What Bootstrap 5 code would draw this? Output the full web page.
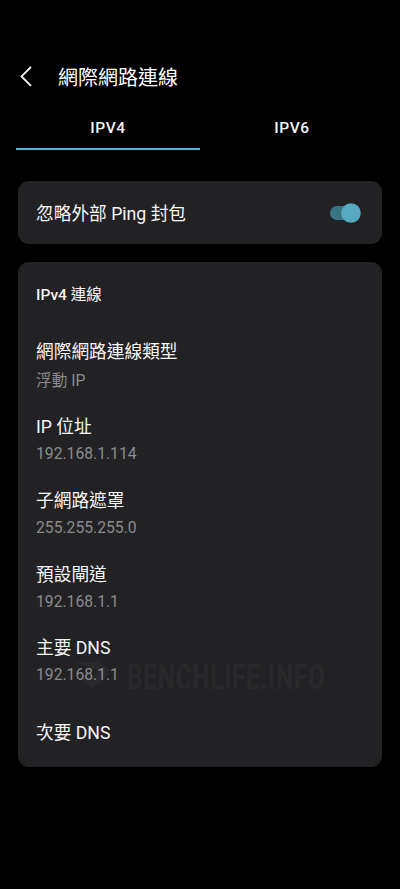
<!DOCTYPE html>
<html lang="zh-Hant" data-bs-theme="dark">
<head>
<meta charset="utf-8">
<meta name="viewport" content="width=device-width, initial-scale=1">
<title>網際網路連線</title>
<link href="https://cdn.jsdelivr.net/npm/bootstrap@5.3.0/dist/css/bootstrap.min.css" rel="stylesheet">
<style>
body{background:#000;color:#f5f5f5;font-family:Roboto,"Noto Sans CJK TC",sans-serif;min-height:889px}
.topbar{padding:62px 20px 0;height:107px}
.topbar h1{font-size:20px;line-height:32px;margin-left:26px}
.back-icon{width:12px;height:21px}
.tabs{margin:0 16px;height:43px}
.tabs .nav-link{color:#f5f5f5;font-size:15.5px;font-weight:500;letter-spacing:.6px;line-height:20px;padding:11px 0 10px;border-bottom:2px solid transparent;border-radius:0}
.tabs .nav-link.active{border-color:#57b4ce}
.panel{background:#222224;border:0;border-radius:11px;margin:0 18px;padding:0 18px}
.panel-switch{margin-top:31px;height:63px;padding-right:21px}
.panel-switch .item-label{padding-top:2px}
.panel-list{margin-top:18px;height:505px;padding-top:18px}
.item-label{font-size:17.7px;line-height:30px;white-space:nowrap}
.item-value{font-size:15.7px;line-height:24.6px;color:#8b8b8d}
.group-title{font-size:15.5px;line-height:30px;font-weight:500;margin-bottom:26.5px}
.group-title span{font-weight:400}
.entry{height:73.8px}
.entry-first{height:75.5px}
.entry-first .item-value{line-height:27px}
.entry-last{padding-top:11px}
.toggle{width:31px;height:20px}
.watermark{left:57px;top:384px;width:264px;height:60px;opacity:.03}
</style>
<script src="https://cdn.jsdelivr.net/npm/bootstrap@5.3.0/dist/js/bootstrap.bundle.min.js"></script>
</head>
<body>
<header class="topbar d-flex align-items-start">
  <svg class="back-icon mt-1" viewBox="0 0 12 21" fill="none" stroke="#f5f5f5" stroke-width="1.8"><path d="M11 1 1.5 10.4 11 19.8"/></svg>
  <h1 class="mb-0 fw-normal">網際網路連線</h1>
</header>
<ul class="nav nav-fill tabs flex-nowrap">
  <li class="nav-item w-50"><a class="nav-link active" href="#">IPV4</a></li>
  <li class="nav-item w-50"><a class="nav-link" href="#">IPV6</a></li>
</ul>
<main>
  <section class="card panel panel-switch flex-row align-items-center justify-content-between">
    <span class="item-label">忽略外部 Ping 封包</span>
    <svg class="toggle" viewBox="0 0 31 20"><rect x="0" y="3" width="28" height="14" rx="7" fill="#397482"/><circle cx="21" cy="10" r="9.8" fill="#57a9c1"/></svg>
  </section>
  <section class="card panel panel-list">
    <div class="group-title">IPv4 <span>連線</span></div>
    <div class="entry entry-first"><div class="item-label">網際網路連線類型</div><div class="item-value">浮動 IP</div></div>
    <div class="entry"><div class="item-label">IP 位址</div><div class="item-value">192.168.1.114</div></div>
    <div class="entry"><div class="item-label">子網路遮罩</div><div class="item-value">255.255.255.0</div></div>
    <div class="entry"><div class="item-label">預設閘道</div><div class="item-value">192.168.1.1</div></div>
    <div class="entry"><div class="item-label">主要 DNS</div><div class="item-value">192.168.1.1</div></div>
    <div class="entry-last"><div class="item-label">次要 DNS</div></div>
    <svg class="watermark position-absolute" viewBox="0 0 264 60" fill="#fff"><path d="M0 16H22L35 24 32 31 17 43 6 33 12 28 18 31 24 25Z"/><text x="52" y="29.6" transform="scale(1 1.45)" font-family="Roboto,sans-serif" font-size="24.5" font-weight="700" textLength="198">BENCHLIFE.INFO</text></svg>
  </section>
</main>
</body>
</html>
